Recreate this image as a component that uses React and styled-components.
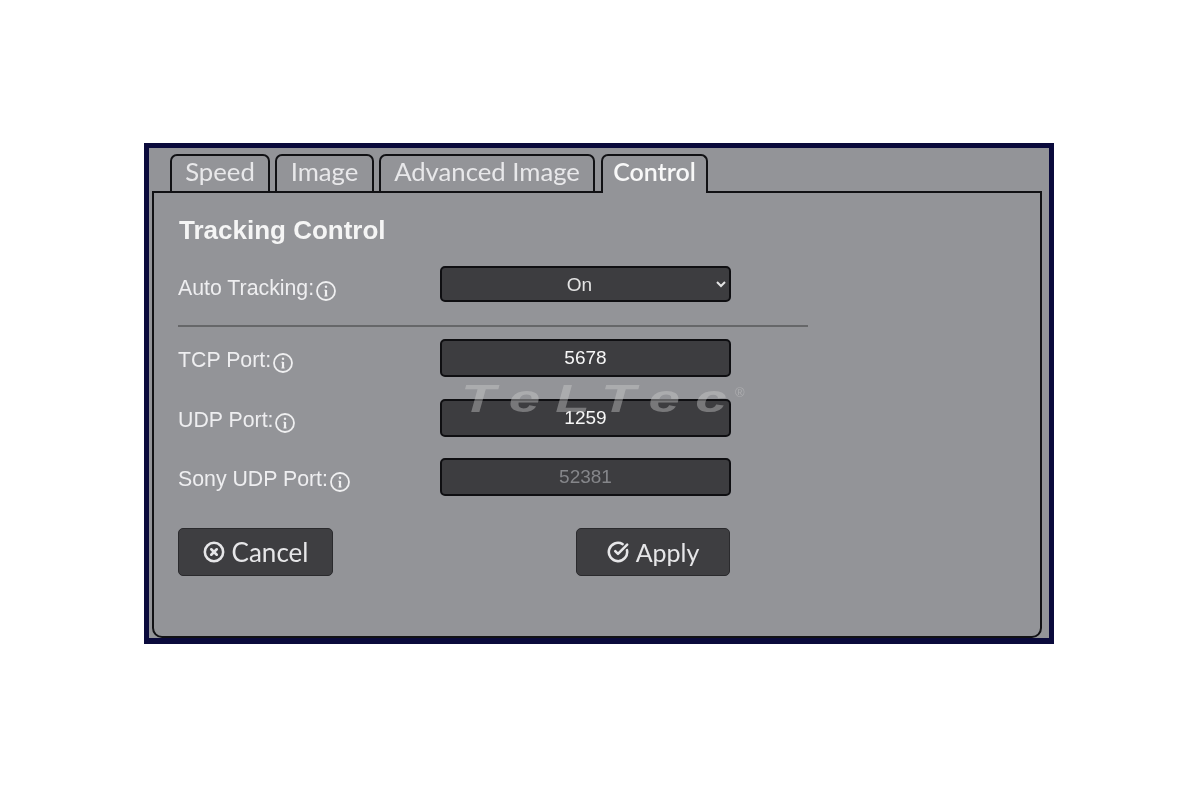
import React from "react";
import styled, { createGlobalStyle } from "styled-components";
import { CircleX, CircleCheckBig } from "lucide-react";

const Global = createGlobalStyle`
  html, body { margin: 0; padding: 0; background: #fff; }
`;

const Page = styled.div`
  width: 1200px;
  height: 800px;
  box-sizing: border-box;
  padding: 143px 146px 156px 144px;
  overflow: hidden;
`;

const Frame = styled.div`
  position: relative;
  height: 100%;
  box-sizing: border-box;
  border: 5px solid #0a0a3c;
  border-bottom-width: 6px;
  background: #939498;
  padding: 6px 7px 0 3px;
  display: flex;
  flex-direction: column;
  filter: blur(0.6px);
`;

const TabBar = styled.div`
  display: flex;
  gap: 5px;
  padding-left: 18px;
  height: 39px;
  margin-bottom: -2px;
  position: relative;
  z-index: 1;
  box-sizing: border-box;
`;

const Tab = styled.div`
  box-sizing: border-box;
  width: ${(p) => p.$w}px;
  margin-left: ${(p) => p.$ml || 0}px;
  height: 39px;
  border: 2px solid #111114;
  border-bottom: ${(p) => (p.$active ? "none" : "2px solid #111114")};
  border-radius: 7px 7px 0 0;
  background: #939498;
  color: ${(p) => (p.$active ? "#f8f8f8" : "#e8e8ea")};
  font: ${(p) => (p.$active ? "600 25px" : "400 25.7px")} "Lato", sans-serif;
  text-align: center;
  line-height: 30px;
  white-space: nowrap;
`;

const Panel = styled.div`
  flex: 1;
  box-sizing: border-box;
  border: 2px solid #111114;
  border-radius: 0 0 10px 10px;
  padding: 22px 24px 0 24px;
`;

const Heading = styled.h2`
  margin: 0 0 21px 1px;
  font: 700 26px/30px "Liberation Sans", Arial, sans-serif;
  color: #f5f5f5;
`;

const Form = styled.div`
  width: 630px;
`;

const Row = styled.div`
  display: flex;
  align-items: center;
  height: ${(p) => p.$h || 38}px;
  margin-bottom: ${(p) => p.$mb || 0}px;
`;

const Label = styled.label`
  width: 262px;
  flex: none;
  display: flex;
  align-items: center;
  padding-top: ${(p) => p.$pt || 4}px;
  box-sizing: border-box;
  font: 400 21.3px "Liberation Sans", Arial, sans-serif;
  color: #eeeef0;
  white-space: nowrap;
`;

const InfoIcon = styled.svg`
  width: 22px;
  height: 22px;
  flex: none;
  margin-left: 1px;
  margin-top: 6px;
`;

const fieldCss = `
  width: 291px;
  box-sizing: border-box;
  border: 2px solid #0f0f12;
  border-radius: 5px;
  background: #3d3d40;
  font: 400 19px "Liberation Sans", Arial, sans-serif;
  text-align: center;
  outline: none;
  padding: 0;
`;

const Select = styled.select`
  ${fieldCss}
  height: 36px;
  color: #e4e4e4;
`;

const Input = styled.input`
  ${fieldCss}
  height: 38px;
  color: ${(p) => (p.disabled ? "#85868a" : "#f6f6f6")};
  &:disabled { opacity: 1; background: #3d3d40; }
`;

const Divider = styled.hr`
  margin: 23px 0 12px 0;
  border: none;
  height: 2px;
  background: #666769;
`;

const Actions = styled.div`
  width: 552px;
  margin-top: 32px;
  display: flex;
  justify-content: space-between;
`;

const Button = styled.button`
  width: ${(p) => p.$w}px;
  height: 48px;
  box-sizing: border-box;
  border: 1px solid #2a2a2d;
  border-radius: 5px;
  background: #3e3e41;
  color: #e6e6e8;
  font: 400 ${(p) => p.$fs}px "Lato", sans-serif;
  display: flex;
  align-items: center;
  justify-content: center;
  gap: 7px;
  padding: 0;
`;

const Watermark = styled.div`
  position: absolute;
  left: 312px;
  top: 228px;
  color: rgba(206, 206, 206, 0.41);
  font: italic 900 39px/46px "Liberation Sans", Arial, sans-serif;
  white-space: nowrap;
  pointer-events: none;
  z-index: 2;
`;

const Mark = styled.span`
  display: inline-block;
  letter-spacing: 10.5px;
  transform: scaleX(1.45);
  transform-origin: left center;
`;

const Registered = styled.span`
  position: absolute;
  left: 274px;
  top: 9px;
  font: 400 13px/15px "Liberation Sans", Arial, sans-serif;
`;

const Info = () => (
  <InfoIcon viewBox="0 0 22 22" fill="none" stroke="#efeff0">
    <circle cx="11" cy="11" r="9" strokeWidth="1.8" />
    <path d="M11 10v6" strokeWidth="2.2" />
    <path d="M9.4 10.2H11M9.4 16h3.2" strokeWidth="1" />
    <circle cx="11" cy="6.8" r="1.2" fill="#efeff0" stroke="none" />
  </InfoIcon>
);

export default function App() {
  return (
    <Page>
      <Global />
      <Frame>
        <TabBar>
          <Tab $w={100}>Speed</Tab>
          <Tab $w={99}>Image</Tab>
          <Tab $w={216}>Advanced Image</Tab>
          <Tab $w={107} $ml={1} $active>Control</Tab>
        </TabBar>
        <Panel>
          <Heading>Tracking Control</Heading>
          <Form>
            <Row $h={36}>
              <Label $pt={8}>Auto Tracking:<Info /></Label>
              <Select defaultValue="On">
                <option>On</option>
                <option>Off</option>
              </Select>
            </Row>
            <Divider />
            <Row $mb={22}>
              <Label>TCP Port:<Info /></Label>
              <Input readOnly value="5678" />
            </Row>
            <Row $mb={21}>
              <Label>UDP Port:<Info /></Label>
              <Input readOnly value="1259" />
            </Row>
            <Row>
              <Label>Sony UDP Port:<Info /></Label>
              <Input disabled value="52381" />
            </Row>
            <Actions>
              <Button $w={155} $fs={26}><CircleX size={22} strokeWidth={2.8} />Cancel</Button>
              <Button $w={154} $fs={25}><CircleCheckBig size={22} strokeWidth={2.8} />Apply</Button>
            </Actions>
          </Form>
        </Panel>
        <Watermark><Mark>TeLTec</Mark><Registered>®</Registered></Watermark>
      </Frame>
    </Page>
  );
}
